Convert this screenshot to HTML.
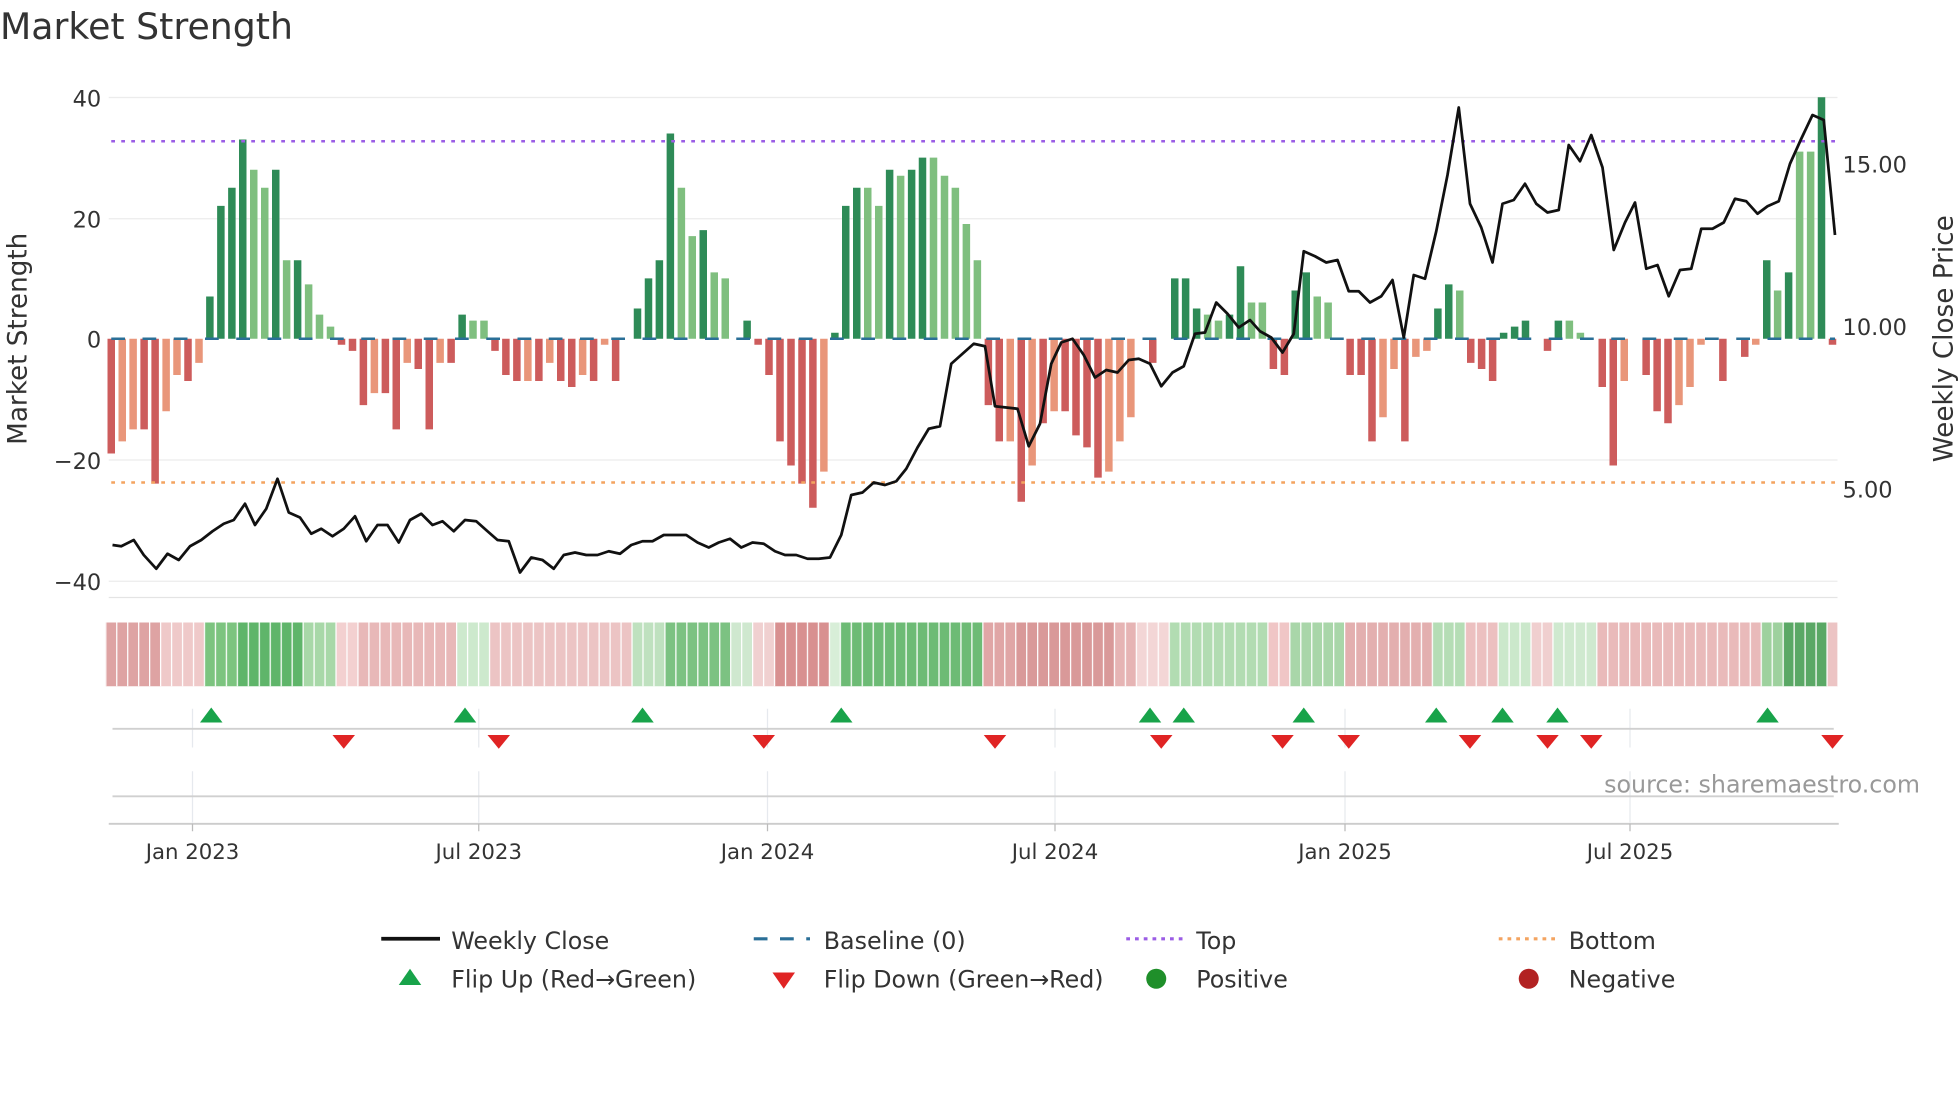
<!DOCTYPE html>
<html><head><meta charset="utf-8"><style>
html,body{margin:0;padding:0;background:#fff;}
svg{display:block;font-family:"DejaVu Sans","Liberation Sans",sans-serif;}
.a{fill:#2e8b57}.b{fill:#7fbf7f}.c{fill:#cd5c5c}.d{fill:#e9967a}
</style></head><body>
<svg width="1960" height="1102" viewBox="0 0 1568 881.6" xmlns="http://www.w3.org/2000/svg">
<defs>
<pattern id="sep" patternUnits="userSpaceOnUse" x="92.9" y="0" width="8.7707" height="10"><rect x="0" y="0" width="1" height="10" fill="#fff"/></pattern>
</defs>
<rect width="1568" height="882" fill="#fff"/>
<text x="0" y="31" font-size="29" fill="#333">Market Strength</text>
<g stroke="#ececec" stroke-width="1">
<line x1="87" y1="78" x2="1470" y2="78"/>
<line x1="87" y1="175" x2="1470" y2="175"/>
<line x1="87" y1="368" x2="1470" y2="368"/>
<line x1="87" y1="465" x2="1470" y2="465"/>
</g>
<line x1="87" y1="478" x2="1470" y2="478" stroke="#e4e4e4"/>
<g font-size="18" fill="#333" text-anchor="end">
<text x="81" y="85">40</text><text x="81" y="182">20</text><text x="81" y="278">0</text>
<text x="81" y="375">−20</text><text x="81" y="472">−40</text>
</g>
<text transform="translate(21,271) rotate(-90)" font-size="21" fill="#333" text-anchor="middle">Market Strength</text>
<g font-size="18" fill="#333">
<text x="1474" y="138">15.00</text><text x="1474" y="268">10.00</text><text x="1474" y="398">5.00</text>
</g>
<text transform="translate(1562,271) rotate(-90)" font-size="21" fill="#333" text-anchor="middle">Weekly Close Price</text>
<g>
<rect class="c" x="86" y="271" width="6" height="91.8"/>
<rect class="d" x="94.8" y="271" width="6" height="82.1"/>
<rect class="d" x="103.5" y="271" width="6" height="72.5"/>
<rect class="c" x="112.3" y="271" width="6" height="72.5"/>
<rect class="c" x="121.1" y="271" width="6" height="115.9"/>
<rect class="d" x="129.9" y="271" width="6" height="58"/>
<rect class="d" x="138.6" y="271" width="6" height="29"/>
<rect class="c" x="147.4" y="271" width="6" height="33.8"/>
<rect class="d" x="156.2" y="271" width="6" height="19.3"/>
<rect class="a" x="164.9" y="237.2" width="6" height="33.8"/>
<rect class="a" x="173.7" y="164.7" width="6" height="106.3"/>
<rect class="a" x="182.5" y="150.2" width="6" height="120.8"/>
<rect class="a" x="191.2" y="111.6" width="6" height="159.4"/>
<rect class="b" x="200" y="135.8" width="6" height="135.2"/>
<rect class="b" x="208.8" y="150.2" width="6" height="120.8"/>
<rect class="a" x="217.6" y="135.8" width="6" height="135.2"/>
<rect class="b" x="226.3" y="208.2" width="6" height="62.8"/>
<rect class="a" x="235.1" y="208.2" width="6" height="62.8"/>
<rect class="b" x="243.9" y="227.5" width="6" height="43.5"/>
<rect class="b" x="252.6" y="251.7" width="6" height="19.3"/>
<rect class="b" x="261.4" y="261.3" width="6" height="9.7"/>
<rect class="c" x="270.2" y="271" width="6" height="4.8"/>
<rect class="c" x="279" y="271" width="6" height="9.7"/>
<rect class="c" x="287.7" y="271" width="6" height="53.1"/>
<rect class="d" x="296.5" y="271" width="6" height="43.5"/>
<rect class="c" x="305.3" y="271" width="6" height="43.5"/>
<rect class="c" x="314" y="271" width="6" height="72.5"/>
<rect class="d" x="322.8" y="271" width="6" height="19.3"/>
<rect class="c" x="331.6" y="271" width="6" height="24.2"/>
<rect class="c" x="340.4" y="271" width="6" height="72.5"/>
<rect class="d" x="349.1" y="271" width="6" height="19.3"/>
<rect class="c" x="357.9" y="271" width="6" height="19.3"/>
<rect class="a" x="366.7" y="251.7" width="6" height="19.3"/>
<rect class="b" x="375.4" y="256.5" width="6" height="14.5"/>
<rect class="b" x="384.2" y="256.5" width="6" height="14.5"/>
<rect class="c" x="393" y="271" width="6" height="9.7"/>
<rect class="c" x="401.7" y="271" width="6" height="29"/>
<rect class="c" x="410.5" y="271" width="6" height="33.8"/>
<rect class="d" x="419.3" y="271" width="6" height="33.8"/>
<rect class="c" x="428.1" y="271" width="6" height="33.8"/>
<rect class="d" x="436.8" y="271" width="6" height="19.3"/>
<rect class="c" x="445.6" y="271" width="6" height="33.8"/>
<rect class="c" x="454.4" y="271" width="6" height="38.6"/>
<rect class="d" x="463.1" y="271" width="6" height="29"/>
<rect class="c" x="471.9" y="271" width="6" height="33.8"/>
<rect class="d" x="480.7" y="271" width="6" height="4.8"/>
<rect class="c" x="489.5" y="271" width="6" height="33.8"/>
<rect class="a" x="507" y="246.8" width="6" height="24.2"/>
<rect class="a" x="515.8" y="222.7" width="6" height="48.3"/>
<rect class="a" x="524.5" y="208.2" width="6" height="62.8"/>
<rect class="a" x="533.3" y="106.8" width="6" height="164.2"/>
<rect class="b" x="542.1" y="150.2" width="6" height="120.8"/>
<rect class="b" x="550.8" y="188.9" width="6" height="82.1"/>
<rect class="a" x="559.6" y="184.1" width="6" height="86.9"/>
<rect class="b" x="568.4" y="217.9" width="6" height="53.1"/>
<rect class="b" x="577.2" y="222.7" width="6" height="48.3"/>
<rect class="a" x="594.7" y="256.5" width="6" height="14.5"/>
<rect class="c" x="603.5" y="271" width="6" height="4.8"/>
<rect class="c" x="612.2" y="271" width="6" height="29"/>
<rect class="c" x="621" y="271" width="6" height="82.1"/>
<rect class="c" x="629.8" y="271" width="6" height="101.4"/>
<rect class="c" x="638.6" y="271" width="6" height="115.9"/>
<rect class="c" x="647.3" y="271" width="6" height="135.2"/>
<rect class="d" x="656.1" y="271" width="6" height="106.3"/>
<rect class="a" x="664.9" y="266.2" width="6" height="4.8"/>
<rect class="a" x="673.6" y="164.7" width="6" height="106.3"/>
<rect class="a" x="682.4" y="150.2" width="6" height="120.8"/>
<rect class="b" x="691.2" y="150.2" width="6" height="120.8"/>
<rect class="b" x="700" y="164.7" width="6" height="106.3"/>
<rect class="a" x="708.7" y="135.8" width="6" height="135.2"/>
<rect class="b" x="717.5" y="140.6" width="6" height="130.4"/>
<rect class="a" x="726.3" y="135.8" width="6" height="135.2"/>
<rect class="a" x="735" y="126.1" width="6" height="144.9"/>
<rect class="b" x="743.8" y="126.1" width="6" height="144.9"/>
<rect class="b" x="752.6" y="140.6" width="6" height="130.4"/>
<rect class="b" x="761.3" y="150.2" width="6" height="120.8"/>
<rect class="b" x="770.1" y="179.2" width="6" height="91.8"/>
<rect class="b" x="778.9" y="208.2" width="6" height="62.8"/>
<rect class="c" x="787.7" y="271" width="6" height="53.1"/>
<rect class="c" x="796.4" y="271" width="6" height="82.1"/>
<rect class="d" x="805.2" y="271" width="6" height="82.1"/>
<rect class="c" x="814" y="271" width="6" height="130.4"/>
<rect class="d" x="822.7" y="271" width="6" height="101.4"/>
<rect class="c" x="831.5" y="271" width="6" height="67.6"/>
<rect class="d" x="840.3" y="271" width="6" height="58"/>
<rect class="c" x="849.1" y="271" width="6" height="58"/>
<rect class="c" x="857.8" y="271" width="6" height="77.3"/>
<rect class="c" x="866.6" y="271" width="6" height="86.9"/>
<rect class="c" x="875.4" y="271" width="6" height="111.1"/>
<rect class="d" x="884.1" y="271" width="6" height="106.3"/>
<rect class="d" x="892.9" y="271" width="6" height="82.1"/>
<rect class="d" x="901.7" y="271" width="6" height="62.8"/>
<rect class="c" x="919.2" y="271" width="6" height="19.3"/>
<rect class="a" x="936.8" y="222.7" width="6" height="48.3"/>
<rect class="a" x="945.5" y="222.7" width="6" height="48.3"/>
<rect class="a" x="954.3" y="246.8" width="6" height="24.2"/>
<rect class="b" x="963.1" y="251.7" width="6" height="19.3"/>
<rect class="b" x="971.8" y="256.5" width="6" height="14.5"/>
<rect class="a" x="980.6" y="251.7" width="6" height="19.3"/>
<rect class="a" x="989.4" y="213" width="6" height="58"/>
<rect class="b" x="998.2" y="242" width="6" height="29"/>
<rect class="b" x="1006.9" y="242" width="6" height="29"/>
<rect class="c" x="1015.7" y="271" width="6" height="24.2"/>
<rect class="c" x="1024.5" y="271" width="6" height="29"/>
<rect class="a" x="1033.2" y="232.4" width="6" height="38.6"/>
<rect class="a" x="1042" y="217.9" width="6" height="53.1"/>
<rect class="b" x="1050.8" y="237.2" width="6" height="33.8"/>
<rect class="b" x="1059.5" y="242" width="6" height="29"/>
<rect class="c" x="1077.1" y="271" width="6" height="29"/>
<rect class="c" x="1085.9" y="271" width="6" height="29"/>
<rect class="c" x="1094.6" y="271" width="6" height="82.1"/>
<rect class="d" x="1103.4" y="271" width="6" height="62.8"/>
<rect class="d" x="1112.2" y="271" width="6" height="24.2"/>
<rect class="c" x="1120.9" y="271" width="6" height="82.1"/>
<rect class="d" x="1129.7" y="271" width="6" height="14.5"/>
<rect class="d" x="1138.5" y="271" width="6" height="9.7"/>
<rect class="a" x="1147.3" y="246.8" width="6" height="24.2"/>
<rect class="a" x="1156" y="227.5" width="6" height="43.5"/>
<rect class="b" x="1164.8" y="232.4" width="6" height="38.6"/>
<rect class="c" x="1173.6" y="271" width="6" height="19.3"/>
<rect class="c" x="1182.3" y="271" width="6" height="24.2"/>
<rect class="c" x="1191.1" y="271" width="6" height="33.8"/>
<rect class="a" x="1199.9" y="266.2" width="6" height="4.8"/>
<rect class="a" x="1208.7" y="261.3" width="6" height="9.7"/>
<rect class="a" x="1217.4" y="256.5" width="6" height="14.5"/>
<rect class="c" x="1235" y="271" width="6" height="9.7"/>
<rect class="a" x="1243.7" y="256.5" width="6" height="14.5"/>
<rect class="b" x="1252.5" y="256.5" width="6" height="14.5"/>
<rect class="b" x="1261.3" y="266.2" width="6" height="4.8"/>
<rect class="c" x="1278.8" y="271" width="6" height="38.6"/>
<rect class="c" x="1287.6" y="271" width="6" height="101.4"/>
<rect class="d" x="1296.4" y="271" width="6" height="33.8"/>
<rect class="c" x="1313.9" y="271" width="6" height="29"/>
<rect class="c" x="1322.7" y="271" width="6" height="58"/>
<rect class="c" x="1331.4" y="271" width="6" height="67.6"/>
<rect class="d" x="1340.2" y="271" width="6" height="53.1"/>
<rect class="d" x="1349" y="271" width="6" height="38.6"/>
<rect class="d" x="1357.8" y="271" width="6" height="4.8"/>
<rect class="c" x="1375.3" y="271" width="6" height="33.8"/>
<rect class="c" x="1392.8" y="271" width="6" height="14.5"/>
<rect class="d" x="1401.6" y="271" width="6" height="4.8"/>
<rect class="a" x="1410.4" y="208.2" width="6" height="62.8"/>
<rect class="b" x="1419.1" y="232.4" width="6" height="38.6"/>
<rect class="a" x="1427.9" y="217.9" width="6" height="53.1"/>
<rect class="b" x="1436.7" y="121.3" width="6" height="149.7"/>
<rect class="b" x="1445.5" y="121.3" width="6" height="149.7"/>
<rect class="a" x="1454.2" y="77.8" width="6" height="193.2"/>
<rect class="c" x="1463" y="271" width="6" height="4.8"/>
</g>
<line x1="89" y1="113" x2="1468" y2="113" stroke="#9b5de5" stroke-width="2" stroke-dasharray="3,5"/>
<line x1="89" y1="386" x2="1468" y2="386" stroke="#f4a460" stroke-width="2" stroke-dasharray="3,5"/>
<line x1="89" y1="271" x2="1468" y2="271" stroke="#2a6f97" stroke-width="2" stroke-dasharray="11,14"/>
<polyline fill="none" stroke="#111" stroke-width="2.2" stroke-linejoin="round" points="90,436 97,437 107,432 115,444 125,455 134,443 143,448 152,437 161,432 170,425 179,419 187,416 196,403 204,420 213,407 222,383 231,410 240,414 249,427 257,423 266,429 275,423 284,413 293,433 302,420 310,420 319,434 328,416 337,411 346,420 354,417 363,425 372,416 381,417 390,425 398,432 407,433 416,458 425,446 434,448 443,455 451,444 460,442 469,444 478,444 487,441 496,443 505,436 514,433 522,433 531,428 540,428 549,428 558,434 567,438 575,434 584,431 593,438 602,434 611,435 620,441 628,444 637,444 646,447 655,447 664,446 673,428 681,396 690,394 699,386 708,388 717,385 725,375 734,358 743,343 752,341 761,291 770,283 779,275 788,277 796,325 805,326 814,327 823,357 832,339 841,291 849,274 858,271 867,284 876,302 885,296 894,298 903,288 911,287 920,291 929,309 938,298 947,293 956,267 964,266 973,242 982,251 991,262 1000,256 1008,265 1017,270 1026,282 1035,267 1043,201 1052,205 1061,210 1070,208 1079,233 1087,233 1096,242 1105,237 1114,224 1123,270 1131,220 1140,223 1149,185 1158,140 1167,86 1176,163 1185,182 1194,210 1202,163 1211,160 1220,147 1229,163 1238,170 1247,168 1255,116 1264,129 1273,108 1282,134 1291,200 1300,178 1308,162 1317,215 1326,212 1335,237 1344,216 1353,215 1361,183 1370,183 1379,178 1388,159 1397,161 1406,171 1414,165 1423,161 1432,131 1441,111 1450,92 1459,96 1468,188"/>
<g>
<rect x="84.6" y="498" width="43.9" height="51" fill="#dea3a3"/>
<rect x="128.5" y="498" width="35" height="51" fill="#efc9c9"/>
<rect x="163.5" y="498" width="26.3" height="51" fill="#7cc47f"/>
<rect x="189.8" y="498" width="52.7" height="51" fill="#5fb56a"/>
<rect x="242.5" y="498" width="26.3" height="51" fill="#a8d8a8"/>
<rect x="268.8" y="498" width="17.5" height="51" fill="#f3d0d0"/>
<rect x="286.3" y="498" width="79" height="51" fill="#e8b8b8"/>
<rect x="365.3" y="498" width="26.3" height="51" fill="#cde9cd"/>
<rect x="391.6" y="498" width="114" height="51" fill="#ecc4c4"/>
<rect x="505.6" y="498" width="26.3" height="51" fill="#bfe1bf"/>
<rect x="531.9" y="498" width="52.6" height="51" fill="#7cc282"/>
<rect x="584.5" y="498" width="17.5" height="51" fill="#cfe8cf"/>
<rect x="602" y="498" width="17.6" height="51" fill="#f0d0d0"/>
<rect x="619.6" y="498" width="43.9" height="51" fill="#d89090"/>
<rect x="663.5" y="498" width="8.7" height="51" fill="#d8eed8"/>
<rect x="672.2" y="498" width="114.1" height="51" fill="#6dbb75"/>
<rect x="786.3" y="498" width="26.3" height="51" fill="#e0a6a6"/>
<rect x="812.6" y="498" width="78.9" height="51" fill="#d99999"/>
<rect x="891.5" y="498" width="17.5" height="51" fill="#e6b4b4"/>
<rect x="909" y="498" width="26.4" height="51" fill="#f3d6d6"/>
<rect x="935.4" y="498" width="78.9" height="51" fill="#b2dcb2"/>
<rect x="1014.3" y="498" width="17.5" height="51" fill="#f0c6c6"/>
<rect x="1031.8" y="498" width="43.9" height="51" fill="#a9d6a9"/>
<rect x="1075.7" y="498" width="70.1" height="51" fill="#e3afaf"/>
<rect x="1145.8" y="498" width="26.4" height="51" fill="#b5ddb5"/>
<rect x="1172.2" y="498" width="26.3" height="51" fill="#ecc0c0"/>
<rect x="1198.5" y="498" width="26.3" height="51" fill="#cbe8cb"/>
<rect x="1224.8" y="498" width="17.6" height="51" fill="#f0cfcf"/>
<rect x="1242.4" y="498" width="35.1" height="51" fill="#cfe9cf"/>
<rect x="1277.5" y="498" width="131.5" height="51" fill="#e9baba"/>
<rect x="1409" y="498" width="17.6" height="51" fill="#9ed19e"/>
<rect x="1426.6" y="498" width="35.1" height="51" fill="#5aa865"/>
<rect x="1461.7" y="498" width="8.7" height="51" fill="#ecc4c4"/>
<rect x="84.6" y="498" width="1386" height="51" fill="url(#sep)"/>
</g>
<g stroke="#e6e9ee" stroke-width="1">
<line x1="154" y1="567" x2="154" y2="598"/><line x1="383" y1="567" x2="383" y2="598"/><line x1="614" y1="567" x2="614" y2="598"/><line x1="844" y1="567" x2="844" y2="598"/><line x1="1076" y1="567" x2="1076" y2="598"/><line x1="1304" y1="567" x2="1304" y2="598"/>
<line x1="154" y1="617" x2="154" y2="658"/><line x1="383" y1="617" x2="383" y2="658"/><line x1="614" y1="617" x2="614" y2="658"/><line x1="844" y1="617" x2="844" y2="658"/><line x1="1076" y1="617" x2="1076" y2="658"/><line x1="1304" y1="617" x2="1304" y2="658"/>
</g>
<line x1="90" y1="583" x2="1467" y2="583" stroke="#d0d0d0" stroke-width="1.5"/>
<line x1="90" y1="637" x2="1467" y2="637" stroke="#d0d0d0" stroke-width="1.5"/>
<line x1="87" y1="659" x2="1471" y2="659" stroke="#cccccc" stroke-width="1.5"/>
<g stroke="#bbb"><line x1="154" y1="659" x2="154" y2="665"/><line x1="383" y1="659" x2="383" y2="665"/><line x1="614" y1="659" x2="614" y2="665"/><line x1="844" y1="659" x2="844" y2="665"/><line x1="1076" y1="659" x2="1076" y2="665"/><line x1="1304" y1="659" x2="1304" y2="665"/></g>
<g fill="#18a34a">
<polygon points="169,566 178,578 160,578"/><polygon points="372,566 381,578 363,578"/><polygon points="514,566 523,578 505,578"/><polygon points="673,566 682,578 664,578"/><polygon points="920,566 929,578 911,578"/><polygon points="947,566 956,578 938,578"/><polygon points="1043,566 1052,578 1034,578"/><polygon points="1149,566 1158,578 1140,578"/><polygon points="1202,566 1211,578 1193,578"/><polygon points="1246,566 1255,578 1237,578"/><polygon points="1414,566 1423,578 1405,578"/>
</g>
<g fill="#e02424">
<polygon points="266,588 284,588 275,599"/><polygon points="390,588 408,588 399,599"/><polygon points="602,588 620,588 611,599"/><polygon points="787,588 805,588 796,599"/><polygon points="920,588 938,588 929,599"/><polygon points="1017,588 1035,588 1026,599"/><polygon points="1070,588 1088,588 1079,599"/><polygon points="1167,588 1185,588 1176,599"/><polygon points="1229,588 1247,588 1238,599"/><polygon points="1264,588 1282,588 1273,599"/><polygon points="1457,588 1475,588 1466,599"/>
</g>
<text x="1536" y="634" font-size="19" fill="#999" text-anchor="end">source: sharemaestro.com</text>
<g font-size="17" fill="#333" text-anchor="middle">
<text x="154" y="687">Jan 2023</text><text x="383" y="687">Jul 2023</text><text x="614" y="687">Jan 2024</text><text x="844" y="687">Jul 2024</text><text x="1076" y="687">Jan 2025</text><text x="1304" y="687">Jul 2025</text>
</g>
<g font-size="19" fill="#333">
<line x1="305" y1="751" x2="352" y2="751" stroke="#111" stroke-width="3"/>
<text x="361" y="759">Weekly Close</text>
<line x1="603" y1="751" x2="648" y2="751" stroke="#2a6f97" stroke-width="2.5" stroke-dasharray="11,10"/>
<text x="659" y="759">Baseline (0)</text>
<line x1="901" y1="751" x2="946" y2="751" stroke="#9b5de5" stroke-width="2.5" stroke-dasharray="3,4"/>
<text x="957" y="759">Top</text>
<line x1="1199" y1="751" x2="1244" y2="751" stroke="#f4a460" stroke-width="2.5" stroke-dasharray="3,4"/>
<text x="1255" y="759">Bottom</text>
<polygon points="328,775 337,788 319,788" fill="#18a34a"/>
<text x="361" y="790">Flip Up (Red→Green)</text>
<polygon points="618,778 636,778 627,791" fill="#e02424"/>
<text x="659" y="790">Flip Down (Green→Red)</text>
<circle cx="925" cy="783" r="8" fill="#1f8f2a"/>
<text x="957" y="790">Positive</text>
<circle cx="1223" cy="783" r="8" fill="#b22222"/>
<text x="1255" y="790">Negative</text>
</g>
</svg>
</body></html>
